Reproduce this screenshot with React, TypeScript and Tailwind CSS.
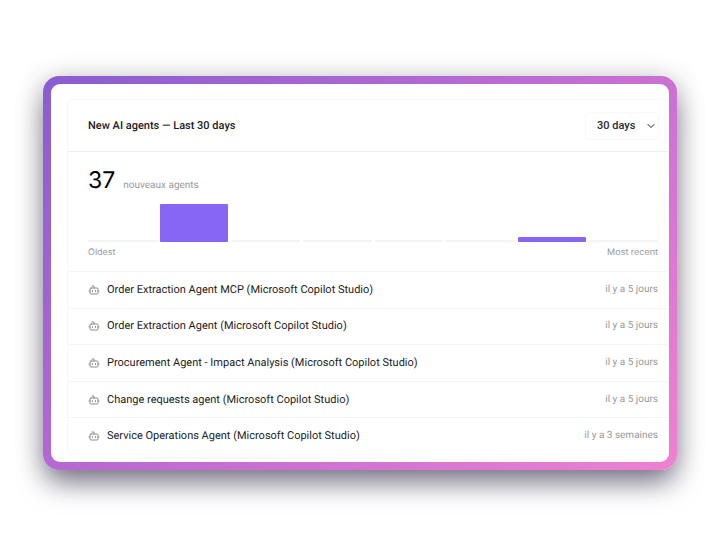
import { useState } from 'react';
import { Bot, ChevronDown } from 'lucide-react';
import clsx from 'clsx';

const AGENTS = [
  { name: 'Order Extraction Agent MCP (Microsoft Copilot Studio)', seen: 'il y a 5 jours' },
  { name: 'Order Extraction Agent (Microsoft Copilot Studio)', seen: 'il y a 5 jours' },
  { name: 'Procurement Agent - Impact Analysis (Microsoft Copilot Studio)', seen: 'il y a 5 jours' },
  { name: 'Change requests agent (Microsoft Copilot Studio)', seen: 'il y a 5 jours' },
  { name: 'Service Operations Agent (Microsoft Copilot Studio)', seen: 'il y a 3 semaines' },
];

// New agents per bucket, oldest first
const BUCKETS = [0, 33, 0, 0, 0, 0, 4, 0];
const MAX = Math.max(...BUCKETS);

function Histogram() {
  return (
    <div>
      <div className="flex h-[38px] items-end gap-[3px]">
        {BUCKETS.map((count, i) => (
          <div
            key={i}
            className={clsx('flex-1', count > 0 ? 'rounded-[1px] bg-[#8566f5]' : 'min-h-[2px] bg-[#f4f4f4]')}
            style={{ height: `${Math.round((count / MAX) * 38)}px` }}
          />
        ))}
      </div>
      <div className="mt-1 flex justify-between font-[Inter,sans-serif] text-[9px] leading-[14px] text-[#999999]">
        <span>Oldest</span>
        <span>Most recent</span>
      </div>
    </div>
  );
}

export default function App() {
  const [range, setRange] = useState('30');

  return (
    <main className="min-h-screen bg-white px-[43px] py-[76px] font-[Roboto,sans-serif] text-[#1c1c1c] [text-rendering:geometricPrecision]">
      <div className="rounded-[16px] bg-[linear-gradient(135deg,#8a5cd0_0%,#c06cd2_50%,#f081d2_100%)] p-2 shadow-[0_4px_28px_rgba(0,0,0,0.24),0_16px_28px_-4px_rgba(30,20,60,0.5)]">
        <div className="overflow-hidden rounded-[9px] bg-white pt-[15px] pb-[7px] pl-4">
          <section className="rounded-l-[6px] border-y border-l border-[#f9f9f9]">
            <header className="flex h-[52px] items-center justify-between border-b border-[#eeeeee] pr-[10px] pl-5">
              <h1 className="text-[11px] leading-4 font-medium">New AI agents — Last 30 days</h1>
              <div className="relative">
                <select
                  aria-label="Period"
                  value={range}
                  onChange={(e) => setRange(e.target.value)}
                  className="h-7 w-[74px] appearance-none rounded-[5px] border border-[#f8f8f8] bg-white pl-[11px] text-[11px] leading-4 font-medium text-[#2a2a2a]"
                >
                  <option value="7">7 days</option>
                  <option value="30">30 days</option>
                  <option value="90">90 days</option>
                </select>
                <ChevronDown className="pointer-events-none absolute top-2 right-[2px] h-3 w-3" />
              </div>
            </header>

            <div className="pt-4 pr-[11px] pb-[11px] pl-5">
              <div className="mb-[10px] flex items-baseline gap-2">
                <span className="font-[Inter,sans-serif] text-[23px] leading-6 text-black">37</span>
                <span className="text-[10px] leading-4 text-[#999999]">nouveaux agents</span>
              </div>
              <Histogram />
            </div>

            <ul className="grid min-h-[183px] auto-rows-fr">
              {AGENTS.map((agent) => (
                <li key={agent.name} className="flex items-center border-t border-[#f5f5f5] pr-[11px] pl-5">
                  <Bot className="h-3 w-3 shrink-0 text-[#8c8c8c]" />
                  <span className="ml-[7px] flex-1 truncate text-[11px] leading-4">{agent.name}</span>
                  <span className="text-[10px] leading-4 text-[#999999]">{agent.seen}</span>
                </li>
              ))}
            </ul>
          </section>
        </div>
      </div>
    </main>
  );
}
